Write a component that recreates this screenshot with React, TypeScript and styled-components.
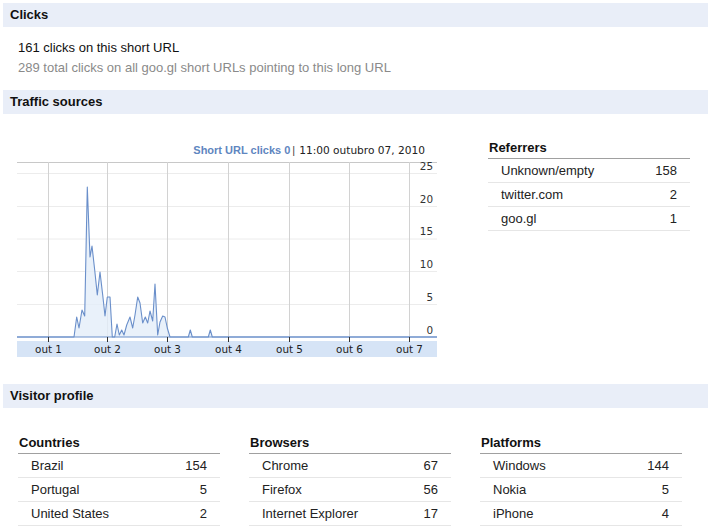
import React from "react";
import styled, { createGlobalStyle } from "styled-components";

const Global = createGlobalStyle`
  html, body { margin: 0; padding: 0; background: #fff; }
  body { font-family: "Liberation Sans", Arial, sans-serif; font-size: 13px; color: #222; }
`;

const Page = styled.div`
  padding: 3px 0 0 3px;
  width: 705px;
`;

const SectionBar = styled.div`
  height: 24px;
  line-height: 24px;
  background: #e9eef8;
  padding-left: 7px;
  font-weight: bold;
  font-size: 13px;
  color: #111;
`;

const ClicksBody = styled.div`
  padding: 11px 0 12px 15px;
  line-height: 20px;
`;

const Line = styled.div<{ $muted?: boolean }>`
  color: ${(p) => (p.$muted ? "#8a8a8a" : "#111")};
`;

const TrafficBody = styled.div`
  display: flex;
  align-items: flex-start;
  padding: 0 0 27px 14px;
`;

const ChartWrap = styled.div`
  width: 420px;
  padding-top: 29px;
`;

const Legend = styled.div`
  height: 14px;
  line-height: 14px;
  text-align: right;
  padding-right: 12px;
  margin-bottom: 1px;
  font-size: 11px;
  white-space: nowrap;
`;

const LegendSeries = styled.span`
  color: #5f86c0;
  font-weight: bold;
`;

const LegendSep = styled.span`
  color: #444;
  margin: 0 4px 0 2px;
`;

const LegendDate = styled.span`
  font-family: "DejaVu Sans", Verdana, sans-serif;
  font-size: 10.6px;
  color: #222;
`;

const ChartSvg = styled.svg`
  display: block;
  font-family: "DejaVu Sans", Verdana, sans-serif;
  font-size: 10.4px;
`;

const ReferrersBox = styled.div`
  margin-left: 51px;
  margin-top: 24px;
`;

const VisitorBody = styled.div`
  display: flex;
  gap: 29px;
  padding: 25px 0 0 15px;
`;

const Table = styled.div`
  width: 202px;
`;

const TableTitle = styled.div`
  height: 20px;
  line-height: 20px;
  padding-left: 1px;
  font-weight: bold;
  color: #111;
  border-bottom: 1px solid #a0a0a0;
`;

const Row = styled.div`
  display: flex;
  justify-content: space-between;
  height: 23px;
  line-height: 23px;
  padding: 0 13px;
  border-bottom: 1px solid #e6e6e6;
`;

type Item = [string, number];

function StatTable({ title, items }: { title: string; items: Item[] }) {
  return (
    <Table>
      <TableTitle>{title}</TableTitle>
      {items.map(([k, v]) => (
        <Row key={k}>
          <span>{k}</span>
          <span>{v}</span>
        </Row>
      ))}
    </Table>
  );
}

const pts: [number, number][] = [
  [17, 337], [74, 337], [76.7, 317], [79, 328], [82, 310], [84.7, 316], [87.3, 187],
  [90, 257], [92, 246], [94.7, 270], [97.3, 295], [100, 272], [102.7, 295], [105, 316],
  [107.3, 297], [110, 297], [112.3, 337], [114.7, 337], [117, 324], [119.3, 335],
  [121.7, 330], [124, 335], [126.7, 325], [130, 317], [132.7, 328], [135, 315],
  [137.7, 297], [140, 303], [142.7, 323], [145.3, 317], [147.7, 323], [150, 311],
  [152.7, 321], [155, 284], [157.7, 335], [160, 322], [162.7, 316], [165, 317],
  [167.3, 328], [170, 337], [188.3, 337], [190.3, 330], [192.3, 337], [208.3, 337],
  [210.3, 330], [212.3, 337], [437, 337],
];

const vx = [48, 107, 167, 228, 289, 349, 409];
const hy: [number, string][] = [
  [173, "25"], [206, "20"], [238.5, "15"], [271, "10"], [304, "5"], [337, "0"],
];

function Chart() {
  const line = pts.map((p) => p.join(",")).join(" ");
  const area = `${line} 437,337 17,337`;
  return (
    <ChartSvg width={420} height={199} viewBox="17 158 420 199">
      <line x1={17} y1={162.5} x2={437} y2={162.5} stroke="#c8c8c8" />
      {hy.slice(0, 5).map(([y]) => (
        <line key={y} x1={17} y1={y + 0.5} x2={437} y2={y + 0.5} stroke="#ececec" />
      ))}
      {vx.map((x) => (
        <line key={x} x1={x + 0.5} y1={162} x2={x + 0.5} y2={337} stroke="#d2d2d2" />
      ))}
      {hy.map(([y, t]) => (
        <text key={t} x={433} y={y - 3.5} textAnchor="end" fill="#333">
          {t}
        </text>
      ))}
      <polygon points={area} fill="#e4edf9" fillOpacity={0.8} />
      <polyline points={line} fill="none" stroke="#6a8fca" strokeWidth={1.1} strokeLinejoin="round" />
      <line x1={17} y1={337} x2={437} y2={337} stroke="#6a8fca" strokeWidth={1.1} />
      <rect x={17} y={341} width={420} height={16} fill="#d6e4f6" />
      {vx.map((x, i) => (
        <g key={x}>
          <line x1={x + 0.5} y1={337} x2={x + 0.5} y2={342} stroke="#333" />
          <text x={x + 0.5} y={353} textAnchor="middle" fill="#222">
            {`out ${i + 1}`}
          </text>
        </g>
      ))}
    </ChartSvg>
  );
}

export default function App() {
  return (
    <>
      <Global />
      <Page>
        <SectionBar>Clicks</SectionBar>
        <ClicksBody>
          <Line>161 clicks on this short URL</Line>
          <Line $muted>289 total clicks on all goo.gl short URLs pointing to this long URL</Line>
        </ClicksBody>
        <SectionBar>Traffic sources</SectionBar>
        <TrafficBody>
          <ChartWrap>
            <Legend>
              <LegendSeries>Short URL clicks 0</LegendSeries>
              <LegendSep>|</LegendSep>
              <LegendDate>11:00 outubro 07, 2010</LegendDate>
            </Legend>
            <Chart />
          </ChartWrap>
          <ReferrersBox>
            <StatTable
              title="Referrers"
              items={[["Unknown/empty", 158], ["twitter.com", 2], ["goo.gl", 1]]}
            />
          </ReferrersBox>
        </TrafficBody>
        <SectionBar>Visitor profile</SectionBar>
        <VisitorBody>
          <StatTable title="Countries" items={[["Brazil", 154], ["Portugal", 5], ["United States", 2]]} />
          <StatTable title="Browsers" items={[["Chrome", 67], ["Firefox", 56], ["Internet Explorer", 17]]} />
          <StatTable title="Platforms" items={[["Windows", 144], ["Nokia", 5], ["iPhone", 4]]} />
        </VisitorBody>
      </Page>
    </>
  );
}
